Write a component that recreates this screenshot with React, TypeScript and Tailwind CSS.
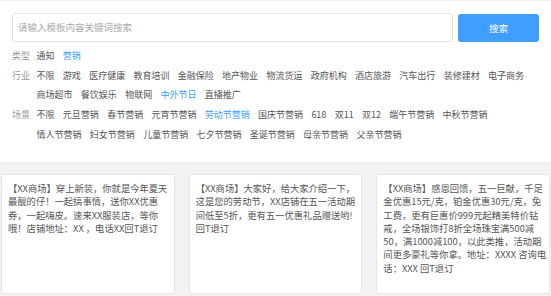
import type { ReactNode } from 'react'

const FONT = "font-['Noto_Sans_CJK_SC','Noto_Sans',sans-serif]"

type Item = { label: string; active?: boolean }

const filters: Array<{ title: string; items: Item[] }> = [
  {
    title: '类型',
    items: [{ label: '通知' }, { label: '营销', active: true }],
  },
  {
    title: '行业',
    items: [
      { label: '不限' },
      { label: '游戏' },
      { label: '医疗健康' },
      { label: '教育培训' },
      { label: '金融保险' },
      { label: '地产物业' },
      { label: '物流货运' },
      { label: '政府机构' },
      { label: '酒店旅游' },
      { label: '汽车出行' },
      { label: '装修建材' },
      { label: '电子商务' },
      { label: '商场超市' },
      { label: '餐饮娱乐' },
      { label: '物联网' },
      { label: '中外节日', active: true },
      { label: '直播推广' },
    ],
  },
  {
    title: '场景',
    items: [
      { label: '不限' },
      { label: '元旦营销' },
      { label: '春节营销' },
      { label: '元宵节营销' },
      { label: '劳动节营销', active: true },
      { label: '国庆节营销' },
      { label: '618' },
      { label: '双11' },
      { label: '双12' },
      { label: '端午节营销' },
      { label: '中秋节营销' },
      { label: '情人节营销' },
      { label: '妇女节营销' },
      { label: '儿童节营销' },
      { label: '七夕节营销' },
      { label: '圣诞节营销' },
      { label: '母亲节营销' },
      { label: '父亲节营销' },
    ],
  },
]

const templates: string[][] = [
  [
    '【XX商场】穿上新装，你就是今年夏天',
    '最靓的仔！一起搞事情，送你XX优惠',
    '券，一起嗨皮。速来XX服装店，等你',
    '哦！店铺地址：XX ，电话XX回T退订',
  ],
  [
    '【XX商场】大家好，给大家介绍一下，',
    '这是您的劳动节，XX店铺在五一活动期',
    '间低至5折，更有五一优惠礼品赠送哟!',
    '回T退订',
  ],
  [
    '【XX商场】感恩回馈，五一巨献，千足',
    '金优惠15元/克，铂金优惠30元/克，免',
    '工费，更有巨惠价999元起精美特价钻',
    '戒，全场银饰打8折全场珠宝满500减',
    '50，满1000减100，以此类推，活动期',
    '间更多豪礼等你拿。地址：XXXX 咨询电',
    '话：XXX 回T退订',
  ],
]

function FilterRow({ title, children }: { title: string; children: ReactNode }) {
  return (
    <div className="flex leading-[19.7px]">
      <span className="w-[24.5px] shrink-0 text-[#9a9a9a]">{title}</span>
      <div className="flex flex-wrap gap-x-[8.3px]">{children}</div>
    </div>
  )
}

function TemplateCard({ lines }: { lines: string[] }) {
  return (
    <div className="h-[120px] rounded-[3px] border border-[#e6e6e6] bg-white px-[6px] pt-[7px] text-[9.3px] leading-[13.3px] text-[#555]">
      {lines.map((l, i) => (
        <div key={i} className="whitespace-nowrap">
          {l}
        </div>
      ))}
    </div>
  )
}

export default function App() {
  return (
    <div className={`h-[296px] w-[551px] overflow-hidden bg-[#f2f2f2] ${FONT}`}>
      <div className="h-[162px] border-t border-[#f0f0f0] bg-white px-[12px] pt-[12px]">
        <div className="flex gap-[5px]">
          <div className="flex h-[29px] w-[441px] items-center rounded-[3px] border border-[#e3e3e3] px-[5px] text-[9.5px] text-[#aaa]">
            请输入模板内容关键词搜索
          </div>
          <button className="mt-px flex h-[28px] w-[81px] items-center justify-center rounded-[3px] bg-[#409eff] text-[9.5px] text-white">
            搜索
          </button>
        </div>

        <div className="mt-[4px] text-[9px] text-[#555]">
          {filters.map((f) => (
            <FilterRow key={f.title} title={f.title}>
              {f.items.map((it) => (
                <span key={it.label} className={it.active ? 'text-[#409eff]' : ''}>
                  {it.label}
                </span>
              ))}
            </FilterRow>
          ))}
        </div>
      </div>

      <div className="grid grid-cols-3 gap-[14px] px-[1px] pt-[12px]">
        {templates.map((t, i) => (
          <TemplateCard key={i} lines={t} />
        ))}
      </div>
    </div>
  )
}
